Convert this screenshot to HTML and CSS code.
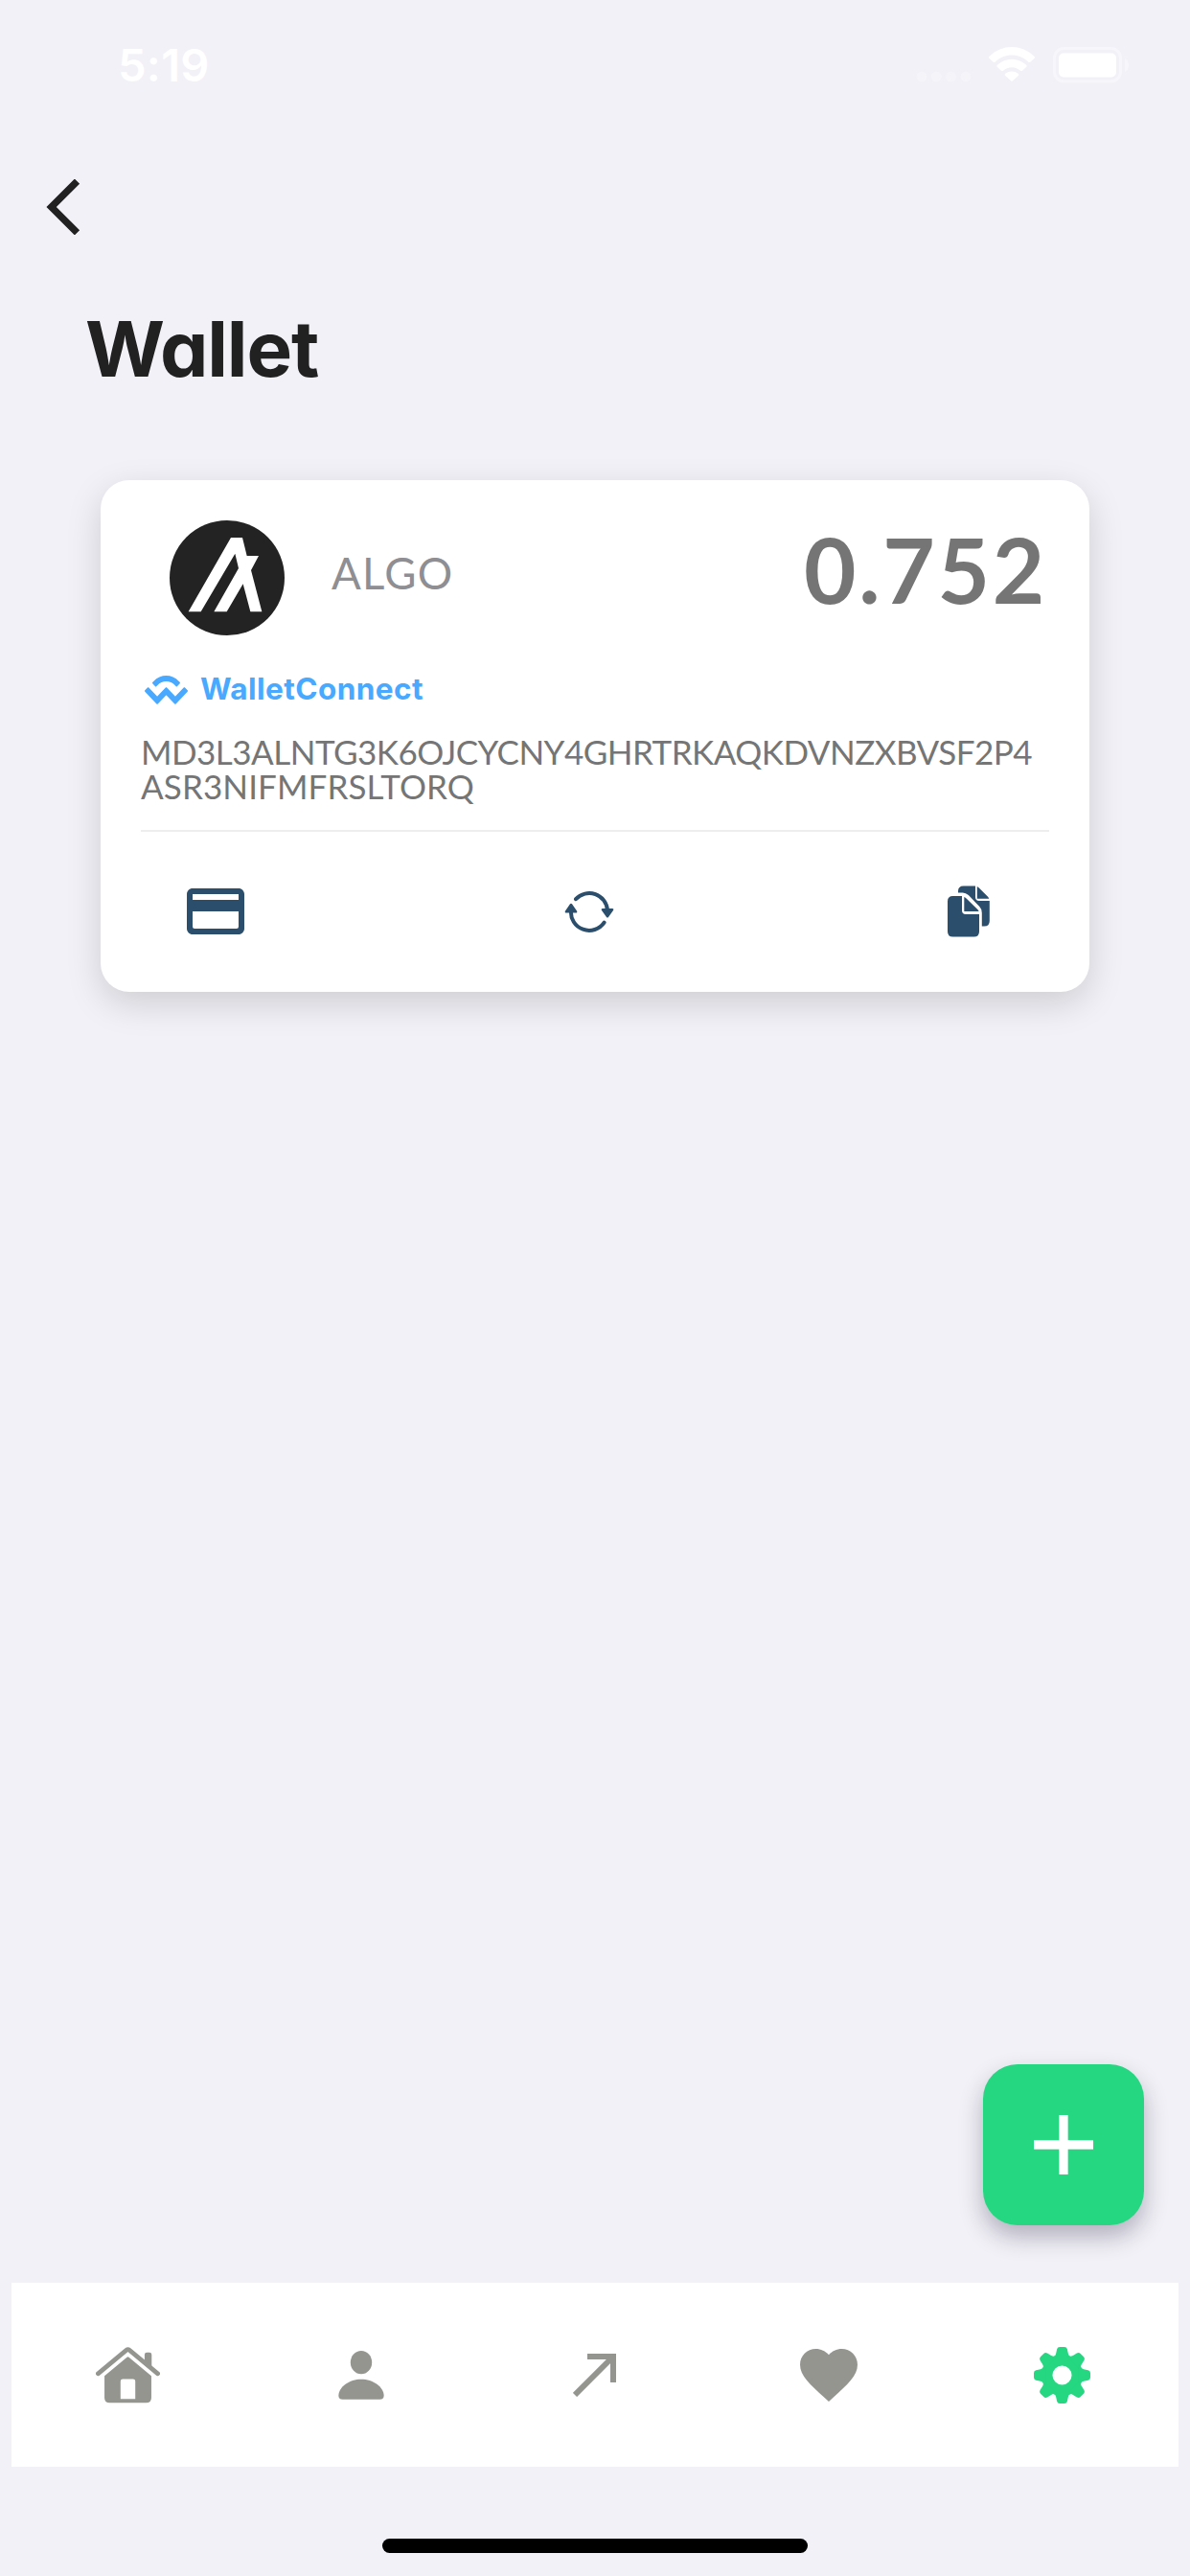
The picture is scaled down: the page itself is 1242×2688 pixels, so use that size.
FILE: index.html
```html
<!DOCTYPE html>
<html lang="en">
<head>
<meta charset="utf-8">
<title>Wallet</title>
<link rel="stylesheet" href="styles.css">
</head>
<body>
<header class="status">
  <span class="time">5:19</span>
  <div class="indicators">
    <svg class="dots" width="58" height="12" viewBox="0 0 58 12"><circle cx="6" cy="6" r="5.5"/><circle cx="21.3" cy="6" r="5.5"/><circle cx="36.6" cy="6" r="5.5"/><circle cx="52" cy="6" r="5.5"/></svg>
    <svg class="wifi" width="48" height="36" viewBox="0 0 144 108"><path d="M1 30C42-10 102-10 143 30q2 3 0 5L130 47q-3 2-6 0C94 18 50 18 20 47q-3 2-6 0L1 35q-2-2 0-5zM26 57C54 32 90 32 118 57q2 3 0 5L105 74q-3 2-6 0C84 60 60 60 45 74q-3 2-6 0L26 62q-2-2 0-5zM51 84C64 74 80 74 93 84q2 3 0 5L75 106q-3 3-6 0L51 89q-2-2 0-5z"/></svg>
    <svg class="battery" width="80" height="38" viewBox="0 0 80 38"><rect class="shell" x="1.5" y="1.5" width="69" height="34.5" rx="10"/><rect x="6" y="6.5" width="60" height="25" rx="5"/><path class="tip" d="M75 12q4 2 4 7t-4 7z"/></svg>
  </div>
</header>
<button class="back" aria-label="Back"><svg width="36" height="58" viewBox="0 0 36 58"><path d="M32.500 2.200 5.700 29 32.500 55.800"/></svg></button>
<main>
  <h1>Wallet</h1>
  <section class="card">
    <div class="balance">
      <svg class="coin" width="120" height="120" viewBox="0 0 360 360"><circle cx="180" cy="180" r="180" fill="#232323"/><path fill="#fff" d="M59 286 192 54H228L242 111H279L255 156 289 286H253L230 199 179 286H139L216 150 205 104 98 286z"/></svg>
      <span class="asset">ALGO</span>
      <span class="amount">0.752</span>
    </div>
    <div class="provider">
      <svg width="45" height="30" viewBox="0 0 300 185" preserveAspectRatio="none"><path d="M61.44 36.26c48.91-47.89 128.21-47.89 177.12 0l5.89 5.76c2.44 2.39 2.44 6.28 0 8.67l-20.14 19.72c-1.22 1.2-3.2 1.2-4.43 0l-8.1-7.93c-34.12-33.41-89.44-33.41-123.56 0l-8.68 8.49c-1.22 1.2-3.2 1.2-4.43 0L54.97 51.26c-2.44-2.39-2.44-6.28 0-8.67zM280.2 77.03l17.93 17.55c2.44 2.39 2.44 6.27 0 8.67l-80.81 79.12c-2.45 2.39-6.41 2.39-8.86 0l-57.35-56.16c-.61-.6-1.6-.6-2.22 0l-57.35 56.16c-2.44 2.39-6.41 2.39-8.85 0L1.87 103.25c-2.44-2.4-2.44-6.28 0-8.67L19.8 77.03c2.44-2.4 6.41-2.4 8.85 0l57.36 56.15c.61.6 1.6.6 2.21 0l57.35-56.15c2.45-2.4 6.41-2.4 8.86 0l57.35 56.15c.62.6 1.61.6 2.22 0l57.35-56.15c2.45-2.4 6.41-2.4 8.86 0z"/></svg>
      <span>WalletConnect</span>
    </div>
    <p class="address"><span class="line-one">MD3L3ALNTG3K6OJCYCNY4GHRTRKAQKDVNZXBVSF2P4</span><br><span class="line-two">ASR3NIFMFRSLTORQ</span></p>
    <div class="actions">
      <svg width="60" height="48" viewBox="2 4 20 16"><path d="M20 4H4c-1.11 0-1.99.89-1.99 2L2 18c0 1.11.89 2 2 2h16c1.11 0 2-.89 2-2V6c0-1.11-.89-2-2-2zm0 13.3q0 .7-.7.7H4.7q-.7 0-.7-.7V12h16zM20 8H4V6h16z"/></svg>
      <svg class="refresh" width="52" height="46" viewBox="589 929 52 46"><path class="arc" d="M601 939.2A19 19 0 0 1 634 951M596 951A19 19 0 0 0 630.6 963.6"/><path d="m590 951.5 5-7.2q1-1.2 2 0l5 7.2q1 2-1 2.1h-10q-2-.1-1-2.1zM628 951l5 7q1 1.200 2 0l5-7q1-2-1-2.100h-10q-2 .1-1 2.100z"/></svg>
      <svg width="44" height="54" viewBox="989 924.500 44 54"><path d="M994.500 935.500h9.500V950.500q0 4 4 4h14v18q0 5.500-5.500 5.500h-22q-5.500 0-5.500-5.500V941q0-5.500 5.500-5.500zM1006.300 936.500q1.500.5 2.500 1.800l11.500 11.200q1 1 1.300 2h-15.300zM1000 932v-1.500q0-5.500 5.500-5.500h12.500v11.500q0 4 4 4h10.800v21q0 5.500-5.500 5.500h-2.500v-14q0-4-2.500-6.500l-11.500-12q-3-2.500-6-2.500zM1019.800 925.500q1 .5 2 1.500l9.500 9.500 1 1.800h-12.500z"/></svg>
    </div>
  </section>
</main>
<button class="add" aria-label="Add wallet"><svg width="62" height="62" viewBox="0 0 62 62"><path d="M31 0v62M0 31h62"/></svg></button>
<nav>
  <a><svg width="67" height="59" viewBox="0 0 200 176"><path d="M27 90 97 32q3-3 6 0L173 90V158q0 16-16 16H43q-16 0-16-16zM84 100q-7 0-7 7v55h46v-55q0-7-7-7zM152 24q0-7 7-7h8q7 0 7 7v42l-22-18z" fill-rule="evenodd"/><path class="roof" d="m7 83 88-73q5-4 10 0l88 73"/></svg></a>
  <a><svg width="48" height="51" viewBox="0 0 142 153"><ellipse cx="71" cy="36.500" rx="33.500" ry="36.500"/><path d="M0 140C1 112 34 89 71 89s70 23 71 51q0 12-13 12H13Q0 152 0 140z"/></svg></a>
  <a><svg width="45" height="45" viewBox="0 0 45 45"><path class="send" d="M15 3h27v27M42 3 2 43"/></svg></a>
  <a><svg width="60" height="55" viewBox="2 3 20 18.350"><path d="m12 21.350-1.450-1.320C5.400 15.360 2 12.270 2 8.500 2 5.410 4.420 3 7.500 3c1.740 0 3.410.81 4.500 2.080C13.090 3.810 14.760 3 16.500 3 19.580 3 22 5.410 22 8.500c0 3.770-3.400 6.860-8.550 11.530z"/></svg></a>
  <a class="active"><svg width="59" height="59" viewBox="-88 -88 176 176"><circle class="ring" r="47"/><g id="pair"><path id="tooth" d="M-34-52Q-21-58-19-67L-16-81Q-14-88-7-88H7Q14-88 16-81L19-67Q21-58 34-52z"/><use href="#tooth" transform="rotate(45)"/></g><use href="#pair" transform="rotate(90)"/><use href="#pair" transform="rotate(180)"/><use href="#pair" transform="rotate(270)"/></svg></a>
</nav>
<div class="home-bar"></div>
</body>
</html>
```
FILE: styles.css
```css
* { box-sizing: border-box; }
body {
  margin: 0;
  height: 2688px;
  display: flex;
  flex-direction: column;
  background: #f2f1f7;
  color: #212121;
  font-family: Lato, sans-serif;
  overflow: hidden;
}
button { border: 0; padding: 0; background: none; }
svg { display: block; flex: none; }

.status {
  height: 132px;
  padding: 49px 63px 0 123px;
  display: flex;
  justify-content: space-between;
  color: #fff;
  fill: #fff;
}
.time {
  font: 600 47px/38px Inter, sans-serif;
  letter-spacing: .300px;
}
.indicators { display: flex; }
.dots { margin: 25px 18px 0 0; opacity: .25; }
.battery { margin-left: 19px; }
.shell { fill: none; stroke: #fff; stroke-width: 3; opacity: .4; }
.tip { opacity: .4; }

.back { width: 36px; height: 58px; margin: 55px 0 0 48px; }
.back path { fill: none; stroke: #212121; stroke-width: 7.400; }

main { padding: 69px 105px 0; }
h1 {
  margin: 0 0 0 -16px;
  height: 187px;
  font: 700 80px/100px Inter, sans-serif;
  font-feature-settings: "cv11";
  letter-spacing: -1.100px;
  white-space: nowrap;
}
.card {
  height: 534px;
  padding: 42px 42px 0;
  border-radius: 30px;
  background: #fff;
  box-shadow: 0 12px 36px rgba(0, 0, 0, .15);
}
.balance { display: flex; height: 120px; padding-left: 30px; }
.asset {
  margin-left: 49px;
  font-size: 45.500px;
  line-height: 109px;
  letter-spacing: 1.300px;
  color: #8e8e93;
}
.amount {
  margin-left: auto;
  padding-right: 2px;
  font-size: 94px;
  line-height: 102px;
  font-weight: 700;
  letter-spacing: 2.700px;
  color: #757575;
}
.provider {
  display: flex;
  height: 30px;
  margin-top: 42px;
  padding-left: 4px;
  gap: 13px;
  fill: #48a9ff;
  color: #48a9ff;
  font: 700 31.500px/28px Inter, sans-serif;
  letter-spacing: .450px;
}
.address {
  margin: 31px 0 0;
  height: 102px;
  border-bottom: 2px solid #eee;
  font-size: 35px;
  line-height: 36px;
  color: #757575;
  white-space: nowrap;
}
.line-one { letter-spacing: -.520px; }
.line-two { letter-spacing: .100px; }
.actions {
  display: flex;
  justify-content: space-between;
  align-items: center;
  padding: 56px 62px 0 48px;
  fill: #2b4e6d;
}
.refresh { margin-right: 14px; }
.arc { fill: none; stroke: #2b4e6d; stroke-width: 4; stroke-linecap: round; }

.add {
  display: grid;
  place-items: center;
  width: 168px;
  height: 168px;
  margin: auto 48px 60px auto;
  flex: none;
  border-radius: 36px;
  background: #24d780;
  box-shadow: 0 12px 24px rgba(30, 30, 60, .3);
}
.add path { fill: none; stroke: #fff; stroke-width: 9.300; }

nav {
  flex: none;
  display: grid;
  grid-template-columns: repeat(5, 1fr);
  height: 192px;
  margin: 0 12px;
  background: #fff;
  fill: #959590;
}
nav a { display: grid; place-items: center; }
.roof { fill: none; stroke: #959590; stroke-width: 14; stroke-linecap: round; }
.send { fill: none; stroke: #959590; stroke-width: 6; }
.active { fill: #24d780; }
.ring { fill: none; stroke: #24d780; stroke-width: 34; }
.home-bar {
  flex: none;
  width: 444px;
  height: 15px;
  margin: 75px auto 24px;
  border-radius: 8px;
  background: #000;
}
```
